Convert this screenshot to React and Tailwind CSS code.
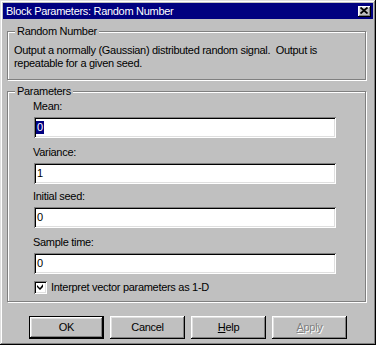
import React from 'react';

const raised = 'shadow-[inset_-1px_-1px_#000,inset_1px_1px_#fff,inset_-2px_-2px_#808080,inset_2px_2px_#dfdfdf]';
const sunken = 'shadow-[inset_1px_1px_#808080,inset_-1px_-1px_#fff,inset_2px_2px_#000,inset_-2px_-2px_#dfdfdf]';

const fields = [
  { label: 'Mean:', value: '0', selected: true, gap: 'mt-[8px]' },
  { label: 'Variance:', value: '1', gap: 'mt-[8px]' },
  { label: 'Initial seed:', value: '0', gap: 'mt-[6px]' },
  { label: 'Sample time:', value: '0', gap: 'mt-[8px]' },
];

const Group = ({ title, className, children }) => (
  <div className={`relative ml-[4px] w-[359px] border border-[#808080] shadow-[inset_1px_1px_#fff,1px_1px_#fff] ${className}`}>
    <span className="absolute left-[7px] -top-[7px] px-[2px] bg-[#c0c0c0] leading-[13px]">{title}</span>
    {children}
  </div>
);

const Button = ({ children, primary, disabled }) => (
  <div className={`w-[75px] h-[23px] flex items-center justify-center bg-[#c0c0c0] leading-[13px] ${primary ? 'border border-black' : ''} ${raised} ${disabled ? 'text-[#808080] [text-shadow:1px_1px_#fff]' : ''}`}>
    {children}
  </div>
);

export default function App() {
  return (
    <div className={`w-[376px] h-[345px] bg-[#c0c0c0] p-[3px] text-[11px] tracking-[-0.3px] text-black font-['Liberation_Sans',Arial,sans-serif] shadow-[inset_-1px_-1px_#000,inset_1px_1px_#dfdfdf,inset_-2px_-2px_#808080,inset_2px_2px_#fff]`}>
      {/* title bar */}
      <div className="h-[16px] bg-[#000080] flex items-center justify-between pl-[3px] pr-[2px] text-white text-[11px]">
        <span className="leading-[16px]">Block Parameters: Random Number</span>
        <div className={`w-[13px] h-[11px] bg-[#c0c0c0] flex items-center justify-center ${raised}`}>
          <svg width="8" height="7" viewBox="0 0 8 7" className="-mt-[1px] -ml-[1px]">
            <path d="M0.5 0.5L7.5 6.5M7.5 0.5L0.5 6.5" stroke="#000" strokeWidth="1.8" />
          </svg>
        </div>
      </div>

      <Group title="Random Number" className="mt-[12px] h-[49px]">
        <p className="pt-[12px] pl-[6px] leading-[13px]">
          Output a normally (Gaussian) distributed random signal.&nbsp; Output is
          <br />
          repeatable for a given seed.
        </p>
      </Group>

      <Group title="Parameters" className="mt-[11px] h-[211px]">
        <div className="flex flex-col">
          {fields.map((f, i) => (
            <div key={i} className={`flex flex-col ${f.gap}`}>
              <span className="ml-[25px] leading-[13px]">{f.label}</span>
              <div className={`mt-[4px] ml-[26px] w-[302px] h-[21px] bg-white flex items-center pl-[2px] ${sunken}`}>
                <span className={`leading-[13px] px-[1px] ${f.selected ? 'bg-[#000080] text-white' : ''}`}>{f.value}</span>
              </div>
            </div>
          ))}
          <div className="mt-[7px] ml-[26px] flex items-center">
            <div className={`w-[13px] h-[13px] bg-white flex items-center justify-center ${sunken}`}>
              <svg width="7" height="7" viewBox="0 0 7 7">
                <path d="M6 0v3L3 6 0 3V1l3 3z" fill="#000" />
              </svg>
            </div>
            <span className="ml-[4px] leading-[13px]">Interpret vector parameters as 1-D</span>
          </div>
        </div>
      </Group>

      <div className="mt-[14px] ml-[26px] flex gap-[6px]">
        <Button primary>OK</Button>
        <Button>Cancel</Button>
        <Button><span><span className="underline">H</span>elp</span></Button>
        <Button disabled><span><span className="underline">A</span>pply</span></Button>
      </div>
    </div>
  );
}
